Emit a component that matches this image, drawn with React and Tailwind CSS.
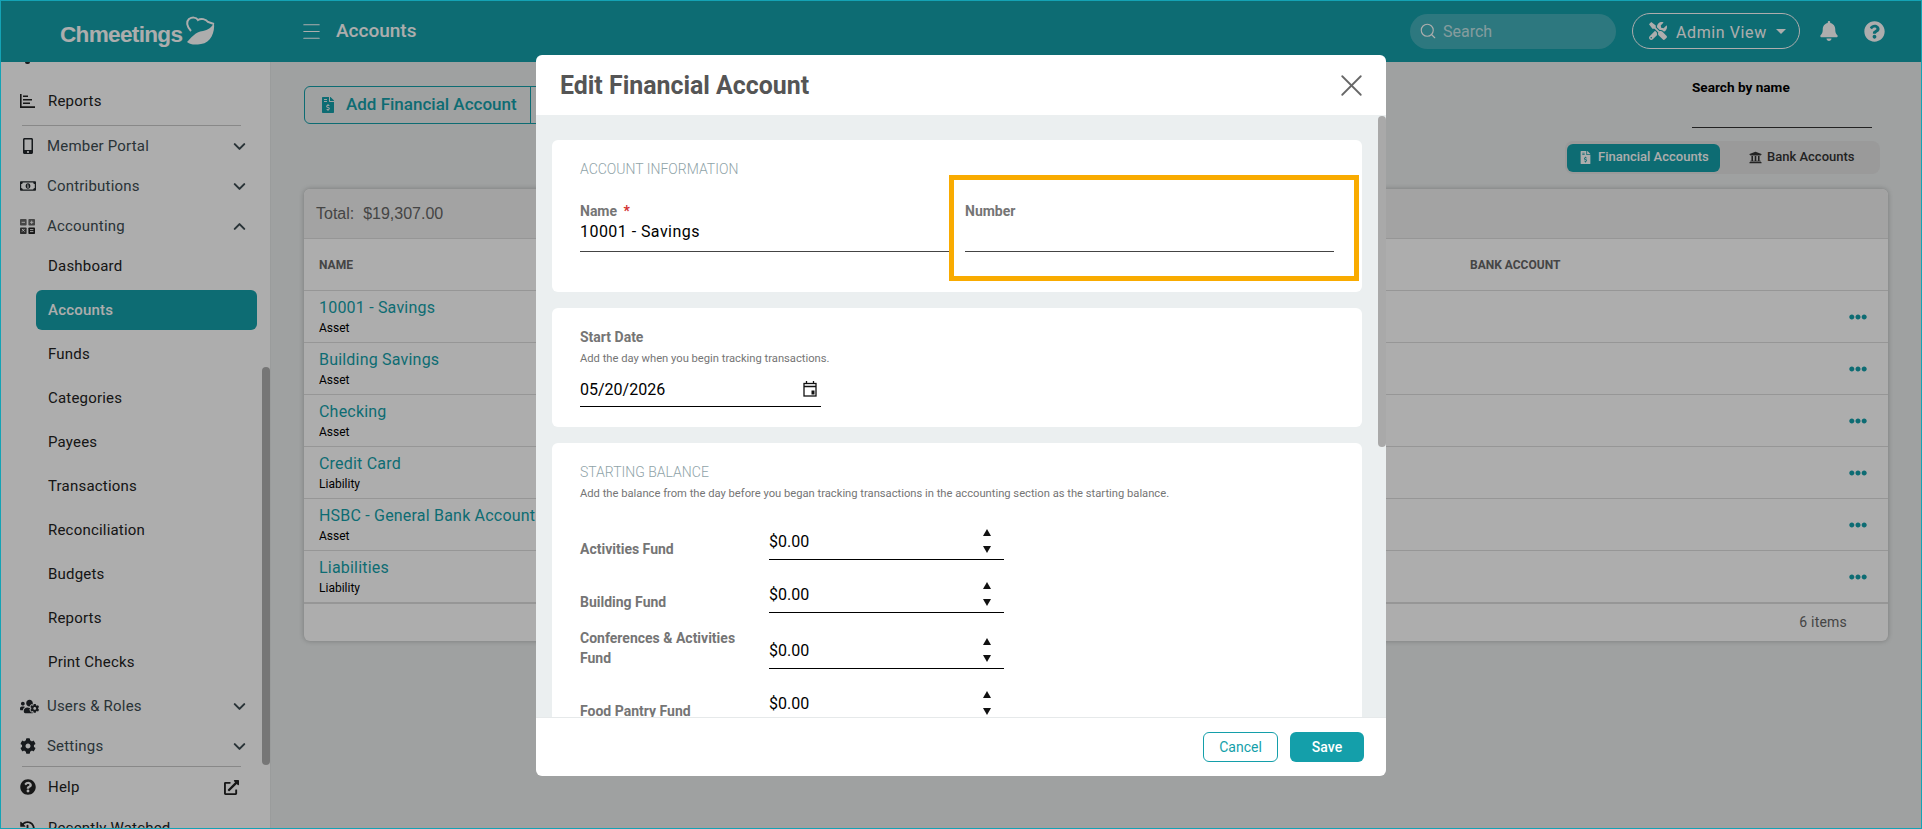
import {
  FaBell,
  FaCog,
  FaEllipsisH,
  FaExternalLinkAlt,
  FaFileInvoiceDollar,
  FaHistory,
  FaMobileAlt,
  FaQuestionCircle,
  FaRegMoneyBillAlt,
  FaTools,
  FaUniversity,
  FaUsersCog,
} from "react-icons/fa";
import { ChevronDown, ChevronUp, Menu, Search, X } from "lucide-react";

const subItems = ["Dashboard", "Accounts", "Funds", "Categories", "Payees", "Transactions", "Reconciliation", "Budgets", "Reports", "Print Checks"];

const accounts = [
  ["10001 - Savings", "Asset"],
  ["Building Savings", "Asset"],
  ["Checking", "Asset"],
  ["Credit Card", "Liability"],
  ["HSBC - General Bank Account", "Asset"],
  ["Liabilities", "Liability"],
];

function ReportsIcon() {
  return (
    <svg width="15" height="14" viewBox="0 0 15 14" fill="currentColor">
      <path d="M0 0h1.6v12.2H15V14H0z" />
      <path d="M3 1.5h5v1.6H3zM3 5h9v1.6H3zM3 8.5h7v1.6H3z" />
    </svg>
  );
}

function CalculatorIcon() {
  return (
    <svg width="15" height="15" viewBox="0 0 15 15">
      <rect width="6.6" height="6.6" rx="0.8" fill="#666" />
      <rect x="8.4" width="6.6" height="6.6" rx="0.8" fill="#666" />
      <rect y="8.4" width="6.6" height="6.6" rx="0.8" fill="#444" />
      <rect x="8.4" y="8.4" width="6.6" height="6.6" rx="0.8" fill="#222" />
      <path d="M1.6 3.3h3.4M10 3.3h3.4M11.7 1.6v3.4M2 10l2.6 2.6M4.6 10L2 12.6M10 10.6h3.4M10 12.6h3.4" stroke="#fff" strokeWidth="0.9" />
    </svg>
  );
}

function CalendarIcon() {
  return (
    <svg width="14" height="16" viewBox="0 0 14 16" fill="none" stroke="#111" strokeWidth="1.3">
      <rect x="1" y="2.5" width="12" height="12.5" />
      <path d="M1 5.5h12M3.5 0v3M10.5 0v3" />
      <rect x="8.5" y="9.5" width="3" height="4" fill="#111" stroke="none" />
    </svg>
  );
}

function LogoMark() {
  return (
    <svg width="29" height="29" viewBox="0 0 29 29" fill="none" stroke="currentColor" strokeWidth="2" className="text-white">
      <path d="M5 15C1 11 0 6 3 3c3-2 7-2 9 1 3-2 8-1 10 2l6 2" />
      <path d="M1 26c4-4 8-10 16-11 5-1 8-3 11-8 1 9-3 20-13 21-6 1-10 1-14-2z" fill="currentColor" stroke="none" />
    </svg>
  );
}

function MainRow({ icon, label, up }) {
  return (
    <div className="h-10 flex items-center pl-[20px] pr-[21px] text-[#3d4c52]">
      <span className="w-[27px] flex items-center text-[#22272b]">{icon}</span>
      <span className="flex-1 text-[15px] tracking-[0.2px]">{label}</span>
      {up ? <ChevronUp size={19} strokeWidth={2.6} /> : <ChevronDown size={19} strokeWidth={2.6} />}
    </div>
  );
}

function Sidebar() {
  return (
    <aside className="relative w-[271px] shrink-0 bg-white border-r border-[#e4e6e6] overflow-hidden">
      {/* bottom of the item scrolled out of view */}
      <div className="ml-[25px] w-[5px] h-[2px] rounded-b-full bg-[#22272b]" />
      <div className="mt-[17px] h-10 flex items-center pl-[20px] text-[#222]">
        <span className="w-[28px]"><ReportsIcon /></span>
        <span className="text-[15px] tracking-[0.2px]">Reports</span>
      </div>
      <div className="mx-[22px] mt-[4px] border-t border-[#c9c9c9] w-[219px]" />
      <MainRow icon={<FaMobileAlt size={16} />} label="Member Portal" />
      <MainRow icon={<FaRegMoneyBillAlt size={16} />} label="Contributions" />
      <MainRow icon={<CalculatorIcon />} label="Accounting" up />
      <div className="flex flex-col gap-1">
        {subItems.map((item) => (
          <div
            key={item}
            className={
              item === "Accounts"
                ? "h-10 ml-[36px] mr-[13px] pl-[12px] flex items-center rounded-md bg-[#149faa] text-white font-medium text-[15px] tracking-[0.2px]"
                : "h-10 ml-[36px] mr-[13px] pl-[12px] flex items-center text-[#222] text-[15px] tracking-[0.2px]"
            }
          >
            {item}
          </div>
        ))}
      </div>
      <div className="mt-1">
        <MainRow icon={<FaUsersCog size={19} />} label="Users & Roles" />
        <MainRow icon={<FaCog size={16} />} label="Settings" />
      </div>
      <div className="mx-[22px] border-t border-[#c9c9c9] w-[219px]" />
      <div className="h-10 flex items-center pl-[20px] pr-[31px] text-[#222]">
        <span className="w-[28px]"><FaQuestionCircle size={16} /></span>
        <span className="flex-1 text-[15px] tracking-[0.2px]">Help</span>
        <FaExternalLinkAlt size={15} />
      </div>
      <div className="h-10 mt-px flex items-center pl-[20px] text-[#222]">
        <span className="w-[28px]"><FaHistory size={15} /></span>
        <span className="text-[15px] tracking-[0.2px]">Recently Watched</span>
      </div>
      {/* sidebar scrollbar */}
      <div className="absolute right-0 top-[305px] w-[8px] h-[398px] rounded-full bg-[#afafaf]" />
    </aside>
  );
}

function TopBar() {
  return (
    <header className="h-[62px] shrink-0 bg-[#149faa] flex items-center text-white">
      <div className="w-[270px] shrink-0 pl-[60px] flex items-center">
        <span className="text-[22.6px] leading-none font-bold tracking-[-0.7px] mt-[8px] [font-family:'Liberation_Sans',sans-serif] text-white">Chmeetings</span>
        <span className="ml-[4px] -mt-[1px]"><LogoMark /></span>
      </div>
      <Menu size={23} strokeWidth={1.2} className="ml-[30px]" />
      <span className="ml-[13px] text-[19px] font-medium">Accounts</span>
      <div className="ml-auto flex items-center mr-[37px]">
        <div className="w-[206px] h-[35px] rounded-full bg-white/20 flex items-center pl-[9px] mr-[16px]">
          <Search size={18} strokeWidth={1.5} />
          <span className="ml-[6px] mt-px text-[16px] text-white/70">Search</span>
        </div>
        <div className="w-[168px] h-[36px] rounded-full border border-white flex items-center pl-[16px]">
          <FaTools size={18} />
          <span className="ml-[9px] mt-[3px] text-[16px] tracking-[0.6px]">Admin View</span>
          <span className="ml-[9px] w-0 h-0 border-x-[5px] border-x-transparent border-t-[5px] border-t-white" />
        </div>
        <FaBell size={20} className="ml-[19px]" />
        <FaQuestionCircle size={21} className="ml-[25px]" />
      </div>
    </header>
  );
}

function Toolbar() {
  return (
    <div className="h-[103px] flex items-start justify-between">
      <div className="h-[38px] w-[300px] rounded-md border border-[#149faa] flex items-center text-[#149faa]">
        <div className="h-full w-[226px] border-r border-[#149faa] flex items-center pl-[15px]">
          <FaFileInvoiceDollar size={16} />
          <span className="ml-[10px] text-[17px] font-medium">Add Financial Account</span>
        </div>
      </div>
      <div className="flex flex-col items-end -mt-[11px]">
        <div className="w-[180px] mr-[16px] h-[53px] border-b border-[#333]">
          <span className="text-[13.6px] font-bold text-black">Search by name</span>
        </div>
        <div className="mt-[13px] mr-[8px] w-[315px] h-[33px] rounded-lg bg-[#e3e3e3] flex items-center p-[2px]">
          <div className="w-[153px] h-[28px] rounded-md bg-[#149faa] text-white flex items-center pl-[12px] text-[13px] font-medium">
            <FaFileInvoiceDollar size={13} />
            <span className="ml-[6px] mb-px">Financial Accounts</span>
          </div>
          <div className="pl-[29px] flex items-center text-[13px] font-medium text-[#333]">
            <FaUniversity size={13} />
            <span className="ml-[5px] mb-px">Bank Accounts</span>
          </div>
        </div>
      </div>
    </div>
  );
}

function AccountsCard() {
  return (
    <div className="rounded-md bg-white shadow-[0_0_5px_rgba(0,0,0,0.25)] overflow-hidden">
      <div className="h-[50px] bg-[#f1f1f1] border-b border-[#dedede] flex items-center pl-[12px] text-[16px] text-[#666] [font-family:'Liberation_Sans',sans-serif]">
        <span className="whitespace-pre">Total:  $19,307.00</span>
      </div>
      <div className="h-[52px] flex items-center pl-[15px] text-[12px] font-bold text-[#666] border-b border-[#dedede]">
        <span className="w-[1151px]">NAME</span>
        <span>BANK ACCOUNT</span>
      </div>
      {accounts.map(([name, type], i) => (
        <div
          key={name}
          className={
            i === accounts.length - 1
              ? "h-[53px] flex items-center justify-between pl-[15px] pr-[21px] border-b-2 border-[#dedede]"
              : "h-[52px] flex items-center justify-between pl-[15px] pr-[21px] border-b border-[#dedede]"
          }
        >
          <div>
            <div className="text-[16px] leading-[20px] tracking-[0.2px] text-[#149faa]">{name}</div>
            <div className="text-[12px] leading-[16px] text-black mt-[2px]">{type}</div>
          </div>
          <FaEllipsisH size={18} className="text-[#149faa]" />
        </div>
      ))}
      <div className="h-[37px] flex items-center justify-end pr-[41px] text-[14px] tracking-[0.2px] text-[#666]">6 items</div>
    </div>
  );
}

function Spinner() {
  return (
    <div className="flex flex-col gap-[10px] mr-[13px]">
      <svg width="8" height="7" viewBox="0 0 8 7" fill="#111"><path d="M4 0l4 7H0z" /></svg>
      <svg width="8" height="7" viewBox="0 0 8 7" fill="#111"><path d="M4 7L0 0h8z" /></svg>
    </div>
  );
}

function BalanceRow({ label, className }) {
  return (
    <div className={"flex items-end " + className}>
      <div className="w-[189px] shrink-0 pr-[16px] pb-[1px] text-[14px] leading-[20px] font-bold text-[#757575]">{label}</div>
      <div className="w-[235px] h-[37px] border-b border-black flex items-center justify-between">
        <span className="text-[16px] text-black mt-px">$0.00</span>
        <Spinner />
      </div>
    </div>
  );
}

function EditModal() {
  return (
    <div className="absolute left-[536px] top-[55px] w-[850px] h-[721px] rounded-md bg-white overflow-hidden flex flex-col">
      <div className="h-[60px] shrink-0 flex items-center justify-between pl-[24px] pr-[16px]">
        <h2 className="mt-[2px] text-[24.9px] font-bold text-[#555]">Edit Financial Account</h2>
        <X size={37} strokeWidth={1.2} className="text-[#666]" />
      </div>
      <div className="relative flex-1 overflow-hidden bg-[#ebeff0] pt-[25px] pl-[16px] pr-[24px]">
        <div className="flex flex-col gap-4">
          <div className="h-[152px] rounded-md bg-white px-[28px] pt-[20px]">
            <div className="text-[14px] leading-[18px] text-[#8fa3a8] font-light">ACCOUNT INFORMATION</div>
            <div className="mt-[24px] flex gap-4">
              <div className="w-[369px] h-[50px] border-b border-[#444]">
                <div className="text-[14px] leading-[18px] font-bold text-[#757575]">
                  Name <span className="text-[#d32f2f] ml-[3px]">*</span>
                </div>
                <div className="mt-px text-[16px] tracking-[0.45px] leading-[22px] text-black">10001 - Savings</div>
              </div>
              <div className="relative w-[369px] h-[50px] border-b border-[#444]">
                <div className="text-[14px] leading-[18px] font-bold text-[#757575]">Number</div>
                {/* highlight around the field */}
                <div className="absolute -left-[16px] -right-[25px] -top-[27px] -bottom-[30px] border-[5px] border-[#f9ab00]" />
              </div>
            </div>
          </div>
          <div className="h-[119px] rounded-md bg-white px-[28px] pt-[20px]">
            <div className="text-[14px] leading-[18px] font-bold text-[#757575]">Start Date</div>
            <div className="mt-[5px] text-[11.2px] leading-[16px] text-[#757575]">Add the day when you begin tracking transactions.</div>
            <div className="mt-[3px] w-[241px] h-[37px] border-b border-black flex items-center justify-between pr-[4px]">
              <span className="mt-[4px] text-[16px] text-black">05/20/2026</span>
              <span className="mt-[2px]"><CalendarIcon /></span>
            </div>
          </div>
          <div className="h-[400px] rounded-md bg-white px-[28px] pt-[20px]">
            <div className="text-[14px] leading-[18px] text-[#8fa3a8] font-light">STARTING BALANCE</div>
            <div className="mt-[5px] text-[11.2px] leading-[16px] text-[#757575]">
              Add the balance from the day before you began tracking transactions in the accounting section as the starting balance.
            </div>
            <BalanceRow label="Activities Fund" className="mt-[21px]" />
            <BalanceRow label="Building Fund" className="mt-[16px]" />
            <BalanceRow label="Conferences & Activities Fund" className="mt-[15px]" />
            <BalanceRow label="Food Pantry Fund" className="mt-[16px]" />
          </div>
        </div>
        <div className="absolute right-0 top-[1px] w-[8px] h-[331px] rounded-full bg-[#a9a9a9]" />
      </div>
      <div className="h-[59px] shrink-0 border-t border-[#e6e9ea] flex items-center justify-end gap-[12px] pr-[22px]">
        <button className="w-[75px] h-[30px] rounded-md border border-[#149faa] text-[#149faa] text-[14px]">Cancel</button>
        <button className="w-[74px] h-[30px] rounded-md bg-[#149faa] text-white text-[14px] font-medium">Save</button>
      </div>
    </div>
  );
}

export default function App() {
  return (
    <div className="relative h-[829px] overflow-hidden bg-[#eaeded] flex flex-col [font-family:Roboto,sans-serif]">
      <TopBar />
      <div className="flex flex-1 min-h-0">
        <Sidebar />
        <main className="flex-1 min-w-0 pl-[33px] pr-[34px] pt-[24px]">
          <Toolbar />
          <AccountsCard />
        </main>
      </div>

      {/* modal backdrop */}
      <div className="absolute inset-0 bg-black/[0.32]" />
      <EditModal />

      {/* window frame */}
      <div className="absolute inset-0 border border-[#14a3b5] pointer-events-none" />
    </div>
  );
}
